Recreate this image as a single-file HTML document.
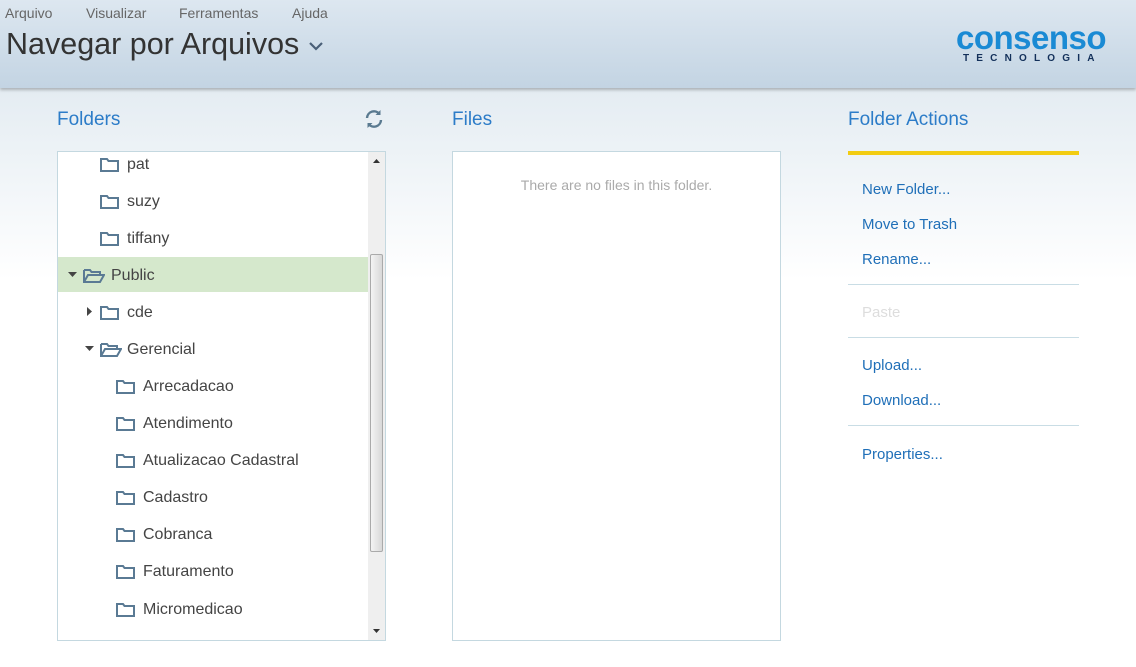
<!DOCTYPE html>
<html><head><meta charset="utf-8"><style>
*{margin:0;padding:0;box-sizing:border-box}
body{width:1136px;height:667px;overflow:hidden;font-family:"Liberation Sans",sans-serif;background:linear-gradient(#e4ecf2 88px,#fff 280px);position:relative}
.hdr{position:absolute;left:0;top:0;width:1136px;height:88px;background:linear-gradient(#dde7f0,#c3d4e3);box-shadow:0 2px 3px rgba(0,0,0,.25)}
.menu{position:absolute;top:5px;font-size:14px;color:#666}
.title{position:absolute;left:6px;top:27px;font-size:30.5px;color:#333}
.logo{position:absolute;left:956px;top:20px;font-size:33px;font-weight:bold;color:#1a8ad4;letter-spacing:-0.5px;line-height:36px}
.logo2{position:absolute;left:963px;top:53px;font-size:10px;font-weight:bold;color:#13305a;letter-spacing:7.2px}
.h2{position:absolute;top:109px;font-size:19px;color:#2c7cc8}
.tree{position:absolute;left:57px;top:151px;width:329px;height:490px;border:1px solid #c4d8e0;background:#fff;overflow:hidden}
.sb{position:absolute;right:0;top:0;width:17px;height:488px;background:#efefef}
.thumb{position:absolute;left:2px;top:102px;width:13px;height:298px;border:1px solid #aaa;border-radius:2px;background:linear-gradient(90deg,#f4f4f4,#d8d8d8)}
.row{position:absolute;left:0;width:310px;height:35px;font-size:16px;color:#444;line-height:37px}
.row svg{position:absolute;top:12px}
.row span{position:absolute}
.files{position:absolute;left:452px;top:151px;width:329px;height:490px;border:1px solid #c4d8e0;background:#fff}
.act{position:absolute;left:862px;font-size:15px;color:#1f6fb8}
.sep{position:absolute;left:848px;width:231px;height:1px;background:#c9dde5}
</style></head><body>
<div class="hdr">
<div class="menu" style="left:5px">Arquivo</div>
<div class="menu" style="left:86px">Visualizar</div>
<div class="menu" style="left:179px">Ferramentas</div>
<div class="menu" style="left:292px">Ajuda</div>
<div class="title">Navegar por Arquivos <svg width="16" height="10" viewBox="0 0 16 10" style="vertical-align:middle"><path d="M2 2l6 6 6-6" stroke="#4a6078" stroke-width="2.2" fill="none"/></svg></div>
<div class="logo">consenso</div>
<div class="logo2">TECNOLOGIA</div>
</div>
<div class="h2" style="left:57px">Folders</div>
<svg style="position:absolute;left:364px;top:109px" width="20" height="20" viewBox="0 0 20 20"><path d="M3 9a7 7 0 0 1 12.5-4M17 11a7 7 0 0 1-12.5 4" stroke="#5a7a90" stroke-width="2.4" fill="none"/><path d="M16.5 1v5h-5z M3.5 19v-5h5z" fill="#5a7a90"/></svg>
<div class="h2" style="left:452px">Files</div>
<div class="h2" style="left:848px">Folder Actions</div>
<div style="position:absolute;left:848px;top:151px;width:231px;height:4px;background:#f2cc12"></div>
<div class="tree">
<div class="row" style="top:-6px"><svg style="left:42px" width="19" height="14"><path d="M1 1h6l1.5 2H18v10H1z" stroke="#5a7a94" stroke-width="2" fill="none"/></svg><span style="left:69px">pat</span></div>
<div class="row" style="top:31px"><svg style="left:42px" width="19" height="14"><path d="M1 1h6l1.5 2H18v10H1z" stroke="#5a7a94" stroke-width="2" fill="none"/></svg><span style="left:69px">suzy</span></div>
<div class="row" style="top:68px"><svg style="left:42px" width="19" height="14"><path d="M1 1h6l1.5 2H18v10H1z" stroke="#5a7a94" stroke-width="2" fill="none"/></svg><span style="left:69px">tiffany</span></div>
<div class="row" style="top:105px;background:#d5e8cc"><svg style="left:10px;top:15px" width="9" height="6"><path d="M0 0h9L4.5 5z" fill="#444"/></svg><svg style="left:25px" width="22" height="14"><path d="M1 1h6l1.5 2H17v3M1 13V1M1 13l4-7h16l-4 7z" stroke="#5a7a94" stroke-width="2" fill="none"/></svg><span style="left:53px">Public</span></div>
<div class="row" style="top:142px"><svg style="left:29px;top:13px" width="6" height="9"><path d="M0 0v9l5-4.5z" fill="#444"/></svg><svg style="left:42px" width="19" height="14"><path d="M1 1h6l1.5 2H18v10H1z" stroke="#5a7a94" stroke-width="2" fill="none"/></svg><span style="left:69px">cde</span></div>
<div class="row" style="top:179px"><svg style="left:27px;top:15px" width="9" height="6"><path d="M0 0h9L4.5 5z" fill="#444"/></svg><svg style="left:42px" width="22" height="14"><path d="M1 1h6l1.5 2H17v3M1 13V1M1 13l4-7h16l-4 7z" stroke="#5a7a94" stroke-width="2" fill="none"/></svg><span style="left:69px">Gerencial</span></div>
<div class="row" style="top:216px"><svg style="left:58px" width="19" height="14"><path d="M1 1h6l1.5 2H18v10H1z" stroke="#5a7a94" stroke-width="2" fill="none"/></svg><span style="left:85px">Arrecadacao</span></div>
<div class="row" style="top:253px"><svg style="left:58px" width="19" height="14"><path d="M1 1h6l1.5 2H18v10H1z" stroke="#5a7a94" stroke-width="2" fill="none"/></svg><span style="left:85px">Atendimento</span></div>
<div class="row" style="top:290px"><svg style="left:58px" width="19" height="14"><path d="M1 1h6l1.5 2H18v10H1z" stroke="#5a7a94" stroke-width="2" fill="none"/></svg><span style="left:85px">Atualizacao Cadastral</span></div>
<div class="row" style="top:327px"><svg style="left:58px" width="19" height="14"><path d="M1 1h6l1.5 2H18v10H1z" stroke="#5a7a94" stroke-width="2" fill="none"/></svg><span style="left:85px">Cadastro</span></div>
<div class="row" style="top:364px"><svg style="left:58px" width="19" height="14"><path d="M1 1h6l1.5 2H18v10H1z" stroke="#5a7a94" stroke-width="2" fill="none"/></svg><span style="left:85px">Cobranca</span></div>
<div class="row" style="top:401px"><svg style="left:58px" width="19" height="14"><path d="M1 1h6l1.5 2H18v10H1z" stroke="#5a7a94" stroke-width="2" fill="none"/></svg><span style="left:85px">Faturamento</span></div>
<div class="row" style="top:439px"><svg style="left:58px" width="19" height="14"><path d="M1 1h6l1.5 2H18v10H1z" stroke="#5a7a94" stroke-width="2" fill="none"/></svg><span style="left:85px">Micromedicao</span></div>
<div class="sb"><svg style="position:absolute;left:5px;top:7px" width="7" height="4"><path d="M0 4h7L3.5 0z" fill="#333"/></svg><div class="thumb"></div><svg style="position:absolute;left:5px;top:477px" width="7" height="4"><path d="M0 0h7L3.5 4z" fill="#333"/></svg></div>
</div>
<div class="files"><div style="position:absolute;top:25px;width:100%;text-align:center;font-size:14px;color:#aaa">There are no files in this folder.</div></div>
<div class="act" style="top:181px">New Folder...</div>
<div class="act" style="top:216px">Move to Trash</div>
<div class="act" style="top:251px">Rename...</div>
<div class="sep" style="top:284px"></div>
<div class="act" style="top:304px;color:#ddd">Paste</div>
<div class="sep" style="top:337px"></div>
<div class="act" style="top:357px">Upload...</div>
<div class="act" style="top:392px">Download...</div>
<div class="sep" style="top:425px"></div>
<div class="act" style="top:446px">Properties...</div>
</body></html>
